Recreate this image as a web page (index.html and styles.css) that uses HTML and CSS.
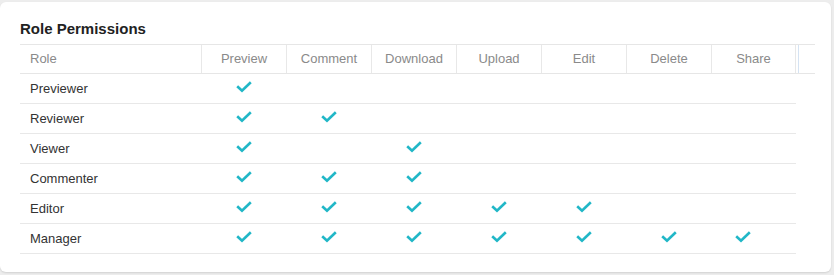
FILE: index.html
```html
<!DOCTYPE html>
<html lang="en">
<head>
<meta charset="utf-8">
<title>Role Permissions</title>
<link rel="stylesheet" href="styles.css">
</head>
<body>
<svg class="defs" width="0" height="0" aria-hidden="true">
  <symbol id="chk" viewBox="0 0 16 12">
    <polyline points="1.2,5.2 6,9.8 14.8,1.2" fill="none" stroke="currentColor" stroke-width="2.6"/>
  </symbol>
</svg>
<div class="card">
  <h2 class="title">Role Permissions</h2>
  <div class="table">
    <div class="thead">
      <div class="th th-role">Role</div>
      <div class="th">Preview</div>
      <div class="th">Comment</div>
      <div class="th">Download</div>
      <div class="th">Upload</div>
      <div class="th">Edit</div>
      <div class="th">Delete</div>
      <div class="th">Share</div>
      <div class="gutter"><span class="gutter-line"></span></div>
    </div>
    <div class="tbody">
      <div class="tr">
        <div class="td td-role">Previewer</div>
        <div class="td"><svg class="check"><use href="#chk"/></svg></div>
        <div class="td"></div><div class="td"></div><div class="td"></div><div class="td"></div><div class="td"></div><div class="td td-last"></div>
      </div>
      <div class="tr">
        <div class="td td-role">Reviewer</div>
        <div class="td"><svg class="check"><use href="#chk"/></svg></div>
        <div class="td"><svg class="check"><use href="#chk"/></svg></div>
        <div class="td"></div><div class="td"></div><div class="td"></div><div class="td"></div><div class="td td-last"></div>
      </div>
      <div class="tr">
        <div class="td td-role">Viewer</div>
        <div class="td"><svg class="check"><use href="#chk"/></svg></div>
        <div class="td"></div>
        <div class="td"><svg class="check"><use href="#chk"/></svg></div>
        <div class="td"></div><div class="td"></div><div class="td"></div><div class="td td-last"></div>
      </div>
      <div class="tr">
        <div class="td td-role">Commenter</div>
        <div class="td"><svg class="check"><use href="#chk"/></svg></div>
        <div class="td"><svg class="check"><use href="#chk"/></svg></div>
        <div class="td"><svg class="check"><use href="#chk"/></svg></div>
        <div class="td"></div><div class="td"></div><div class="td"></div><div class="td td-last"></div>
      </div>
      <div class="tr">
        <div class="td td-role">Editor</div>
        <div class="td"><svg class="check"><use href="#chk"/></svg></div>
        <div class="td"><svg class="check"><use href="#chk"/></svg></div>
        <div class="td"><svg class="check"><use href="#chk"/></svg></div>
        <div class="td"><svg class="check"><use href="#chk"/></svg></div>
        <div class="td"><svg class="check"><use href="#chk"/></svg></div>
        <div class="td"></div><div class="td td-last"></div>
      </div>
      <div class="tr">
        <div class="td td-role">Manager</div>
        <div class="td"><svg class="check"><use href="#chk"/></svg></div>
        <div class="td"><svg class="check"><use href="#chk"/></svg></div>
        <div class="td"><svg class="check"><use href="#chk"/></svg></div>
        <div class="td"><svg class="check"><use href="#chk"/></svg></div>
        <div class="td"><svg class="check"><use href="#chk"/></svg></div>
        <div class="td"><svg class="check"><use href="#chk"/></svg></div>
        <div class="td td-last"><svg class="check"><use href="#chk"/></svg></div>
      </div>
    </div>
  </div>
</div>
</body>
</html>
```

FILE: styles.css
```css
* { box-sizing: border-box; }

html, body {
  margin: 0;
  padding: 0;
  background: #ededed;
  font-family: "Liberation Sans", Arial, sans-serif;
}

body {
  padding: 2px 3px 3px 0;
}

.defs {
  position: absolute;
  width: 0;
  height: 0;
  overflow: hidden;
}

.card {
  background: #fff;
  height: 270px;
  border-radius: 6px;
  box-shadow: 0 1px 2px rgba(0, 0, 0, 0.12);
  padding: 18px 0 0 20px;
}

.title {
  margin: 0 0 7px 0;
  font-size: 15px;
  line-height: 17px;
  font-weight: bold;
  color: #222;
}

.thead {
  display: grid;
  grid-template-columns: 182px repeat(6, 85px) 84px 19px;
  width: 795px;
  border-top: 1px solid #e6e6e6;
  border-bottom: 1px solid #e6e6e6;
}

.th {
  height: 28px;
  line-height: 28px;
  font-size: 13px;
  color: #8a8a8a;
  text-align: center;
  border-right: 1px solid #e8e8e8;
  white-space: nowrap;
}

.th-role {
  text-align: left;
  padding-left: 10px;
}

.gutter {
  display: flex;
}

.gutter-line {
  margin-left: 2px;
  width: 1px;
  background: #d5e3f3;
}

.tr {
  display: grid;
  grid-template-columns: 182px repeat(6, 85px) 84px;
  width: 776px;
  height: 30px;
  border-bottom: 1px solid #e8e8e8;
}

.td {
  display: flex;
  align-items: center;
  justify-content: center;
  font-size: 13px;
  color: #333;
  padding-bottom: 4px;
}

.td-role {
  justify-content: flex-start;
  padding-left: 10px;
  padding-bottom: 0;
}

.td-last {
  padding-right: 20px;
}

.check {
  width: 16px;
  height: 12px;
  color: #21b7c7;
  margin-right: 2px;
}
```
